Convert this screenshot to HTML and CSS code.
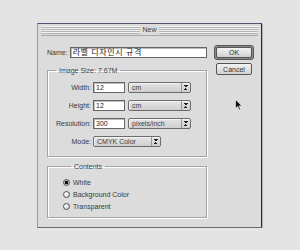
FILE: index.html
```html
<!DOCTYPE html>
<html lang="ko">
<head>
<meta charset="UTF-8">
<title>New</title>
<link rel="stylesheet" href="styles.css">
</head>
<body>
<div class="window">
  <div class="titlebar"><span class="title">New</span></div>
  <div class="dialog-body">
    <div class="main-col">
      <div class="name-row">
        <label>Name:</label>
        <div class="text-field name-field">라벨 디자인시 규격</div>
      </div>

      <fieldset class="group size-group">
        <legend>Image Size: 7.67M</legend>
        <div class="row">
          <label>Width:</label>
          <div class="text-field small-field">12</div>
          <div class="popup unit-popup"><span>cm</span><i class="arrows"></i></div>
        </div>
        <div class="row">
          <label>Height:</label>
          <div class="text-field small-field">12</div>
          <div class="popup unit-popup"><span>cm</span><i class="arrows"></i></div>
        </div>
        <div class="row">
          <label>Resolution:</label>
          <div class="text-field small-field">300</div>
          <div class="popup unit-popup"><span>pixels/inch</span><i class="arrows"></i></div>
        </div>
        <div class="row">
          <label>Mode:</label>
          <div class="popup mode-popup"><span>CMYK Color</span><i class="arrows"></i></div>
        </div>
      </fieldset>

      <fieldset class="group contents-group">
        <legend>Contents</legend>
        <div class="radio-row"><span class="radio checked"></span>White</div>
        <div class="radio-row"><span class="radio"></span>Background Color</div>
        <div class="radio-row"><span class="radio"></span>Transparent</div>
      </fieldset>
    </div>

    <div class="button-col">
      <div class="btn-default"><div class="btn">OK</div></div>
      <div class="btn cancel">Cancel</div>
    </div>
  </div>
</div>

<!-- mouse pointer -->
<svg class="pointer" width="8" height="12" viewBox="0 0 8 12">
  <path d="M0.5 0.5 L0.5 9.5 L2.7 7.4 L4.3 11 L5.6 10.4 L4.1 6.9 L7 6.9 Z" fill="#111" stroke="#fff" stroke-width="0.6"/>
</svg>
</body>
</html>
```

FILE: styles.css
```css
body {
  margin: 0;
  background-color: #e4e4e4;
  font-family: "Liberation Sans", "Noto Sans CJK KR", sans-serif;
  font-size: 7px;
  color: #3a3a3a;
}
.window {
  box-sizing: border-box;
  width: 225px;
  height: 205px;
  margin: 23px 0 0 37px;
  background-color: #dcdcdc;
  border-top: 1px solid #55557a;
  border-left: 1px solid #9a9a9a;
  border-right: 1px solid #2a2a2a;
  border-bottom: 1px solid #6a6a6a;
  box-shadow: 1px 1px 0 #b0b0b0;
}
.titlebar {
  height: 11px;
  margin: 0 3px;
  border-bottom: 1px solid #a8a8a8;
  background: repeating-linear-gradient(#f2f2f2 0 1px, #b4b4b4 1px 2px);
  background-size: 100% 8px;
  background-position: 0 2px;
  background-repeat: no-repeat;
  display: flex;
  justify-content: center;
  align-items: center;
}
.title {
  background-color: #dcdcdc;
  padding: 0 2px;
  color: #444;
  line-height: 9px;
}
.dialog-body {
  display: flex;
  gap: 7px;
  padding: 9px 0 0 9px;
}
.main-col {
  width: 160px;
}
.name-row {
  display: flex;
  justify-content: flex-end;
  align-items: center;
  gap: 2px;
  margin-top: 2px;
}
.text-field {
  box-sizing: border-box;
  height: 11px;
  background-color: #fff;
  border: 1px solid #666;
  box-shadow: inset 1px 1px 0 #bbb;
  padding-left: 2px;
  line-height: 9px;
  color: #222;
  white-space: nowrap;
  overflow: hidden;
}
.name-field {
  width: 138px;
  font-size: 8px;
  letter-spacing: 0.6px;
}
.small-field {
  width: 32px;
}
.group {
  margin: 8px 0 0;
  padding: 7px 0 9px;
  border: 1px solid #a4a4a4;
  box-shadow: 1px 1px 0 #fff, inset 1px 1px 0 #fff;
}
.group legend {
  margin-left: 8px;
  padding: 0 3px;
  line-height: 9px;
  color: #444;
}
.row {
  display: flex;
  align-items: center;
  gap: 2px;
  margin-bottom: 7px;
}
.row:last-child {
  margin-bottom: 0;
}
.row label {
  width: 43px;
  text-align: right;
}
.popup {
  box-sizing: border-box;
  height: 11px;
  display: flex;
  align-items: stretch;
  border: 1px solid #6c6c6c;
  border-radius: 2px;
  background: linear-gradient(#e4e4e4, #cfcfcf);
  box-shadow: inset 1px 1px 0 #f4f4f4;
  color: #444;
  line-height: 9px;
}
.popup span {
  flex: 1;
  padding-left: 3px;
  white-space: nowrap;
  overflow: hidden;
}
.unit-popup {
  width: 63px;
  margin-left: 1px;
}
.mode-popup {
  width: 68px;
}
.arrows {
  width: 8px;
  border-left: 1px solid #9a9a9a;
  background:
    linear-gradient(to top right, transparent 50%, #222 50%) 2px 2px / 2px 2px no-repeat,
    linear-gradient(to top left, transparent 50%, #222 50%) 4px 2px / 2px 2px no-repeat,
    linear-gradient(to bottom right, transparent 50%, #222 50%) 2px 5px / 2px 2px no-repeat,
    linear-gradient(to bottom left, transparent 50%, #222 50%) 4px 5px / 2px 2px no-repeat;
}
.contents-group {
  margin-top: 5px;
  padding: 5px 0 5px 15px;
}
.radio-row {
  display: flex;
  align-items: center;
  gap: 3px;
  height: 12px;
}
.radio {
  box-sizing: border-box;
  width: 7px;
  height: 7px;
  border-radius: 50%;
  border: 1px solid #555;
  background: radial-gradient(circle at 35% 35%, #fff, #c4c4c4);
}
.radio.checked {
  background: radial-gradient(circle, #111 45%, #bbb 55%);
}
.button-col {
  display: flex;
  flex-direction: column;
  align-items: center;
  width: 40px;
}
.btn-default {
  box-sizing: border-box;
  width: 40px;
  height: 15px;
  padding: 1px;
  border: 1px solid #555;
  border-radius: 3px;
  background-color: #8a8a8a;
}
.btn {
  box-sizing: border-box;
  height: 100%;
  border: 1px solid #555;
  border-radius: 2px;
  background: linear-gradient(#f2f2f2, #d2d2d2);
  text-align: center;
  line-height: 9px;
  color: #333;
  display: flex;
  align-items: center;
  justify-content: center;
}
.cancel {
  width: 36px;
  height: 12px;
  margin-top: 3px;
}
.pointer {
  position: absolute;
  left: 235px;
  top: 99px;
}
```
